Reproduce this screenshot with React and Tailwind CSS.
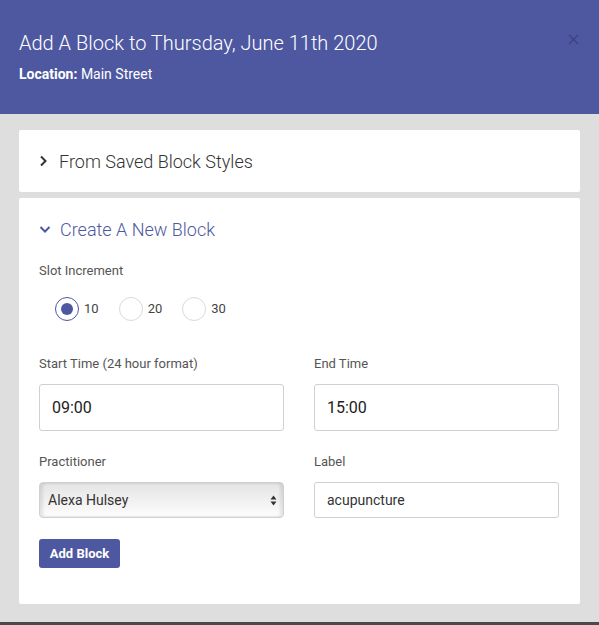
import React from 'react';

const font = { fontFamily: 'Roboto, "Liberation Sans", sans-serif' };

function Radio({ label, checked }) {
  return (
    <div className="flex items-center gap-[5px]">
      <span
        className={`w-6 h-6 rounded-full flex items-center justify-center bg-white ${
          checked ? 'border-[1.5px] border-[#4e58a0]' : 'border border-[#d9d9e0]'
        }`}
      >
        {checked && <span className="w-3 h-3 rounded-full bg-[#4e58a0]" />}
      </span>
      <span className="text-[13px] text-[#444]">{label}</span>
    </div>
  );
}

function Field({ label, children, className = '' }) {
  return (
    <div className={className}>
      <p className="text-[13px] leading-[18px] text-[#555]">{label}</p>
      <div className="mt-[11px]">{children}</div>
    </div>
  );
}

export default function App() {
  return (
    <div className="w-[599px] h-[625px] flex flex-col overflow-hidden" style={font}>
      <header className="h-[114px] shrink-0 bg-[#4e58a0] px-[19px] pt-[30px] relative">
        <h1 className="text-[20px] leading-[26px] font-light text-white">Add A Block to Thursday, June 11th 2020</h1>
        <p className="mt-[9px] text-[14px] leading-[18px] text-white">
          <span className="font-bold">Location:</span> Main Street
        </p>
        <svg
          className="absolute left-[568px] top-[34px]"
          width="11"
          height="11"
          viewBox="0 0 11 11"
          stroke="#3a4280"
          strokeWidth="1.4"
        >
          <path d="M1 1 L10 10 M10 1 L1 10" />
        </svg>
      </header>

      <main className="flex-1 bg-[#dedede] px-[19px] pt-4 border-b-[3px] border-[#4a4a4a]">
        <div className="h-[62px] bg-white rounded-[2px] flex items-center px-5 gap-[11px]">
          <svg width="9" height="12" viewBox="0 0 9 12" fill="none" stroke="#333" strokeWidth="2">
            <path d="M2 1.5 L6.5 6 L2 10.5" />
          </svg>
          <span className="text-[18px] font-light text-[#333]">From Saved Block Styles</span>
        </div>

        <div className="mt-[6px] bg-white rounded-[2px] px-5 pt-[19px] pb-[36px]">
          <div className="flex items-center gap-[9px] h-6">
            <svg width="12" height="9" viewBox="0 0 12 9" fill="none" stroke="#4e58a0" strokeWidth="2">
              <path d="M1.5 2 L6 6.5 L10.5 2" />
            </svg>
            <span className="text-[18px] font-light text-[#4e58a0]">Create A New Block</span>
          </div>

          <p className="mt-[21px] text-[13px] leading-[18px] text-[#555]">Slot Increment</p>
          <div className="mt-[17px] ml-4 flex items-center gap-[20px]">
            <Radio label="10" checked />
            <Radio label="20" />
            <Radio label="30" />
          </div>

          <div className="mt-[34px] grid grid-cols-2 gap-x-[30px] pr-px">
            <Field label="Start Time (24 hour format)">
              <div className="h-[47px] border border-[#cfcfd8] rounded-[3px] flex items-center px-[12px] text-[16px] text-[#222]">
                09:00
              </div>
            </Field>
            <Field label="End Time">
              <div className="h-[47px] border border-[#cfcfd8] rounded-[3px] flex items-center px-[12px] text-[16px] text-[#222]">
                15:00
              </div>
            </Field>
            <Field label="Practitioner" className="mt-[22px]">
              <div className="h-[36px] border border-[#cfcfd8] rounded-[4px] flex items-center justify-between pl-[8px] pr-[6px] text-[14px] text-[#333] bg-gradient-to-b from-[#e4e4e4] to-[#fdfdfd] shadow-[inset_3px_0_3px_rgba(0,0,0,0.09),inset_-3px_0_3px_rgba(0,0,0,0.09)]">
                <span>Alexa Hulsey</span>
                <svg width="7" height="11" viewBox="0 0 7 11" fill="#333">
                  <path d="M3.5 0.5 L6.5 4.5 H0.5 Z M3.5 10.5 L6.5 6.5 H0.5 Z" />
                </svg>
              </div>
            </Field>
            <Field label="Label" className="mt-[22px]">
              <div className="h-[36px] border border-[#cfcfd8] rounded-[3px] flex items-center px-[12px] text-[14px] text-[#333]">
                acupuncture
              </div>
            </Field>
          </div>

          <button className="mt-[21px] h-[29px] w-[81px] rounded-[3px] bg-[#4e58a0] text-white text-[13px] font-bold">
            Add Block
          </button>
        </div>
      </main>
    </div>
  );
}
